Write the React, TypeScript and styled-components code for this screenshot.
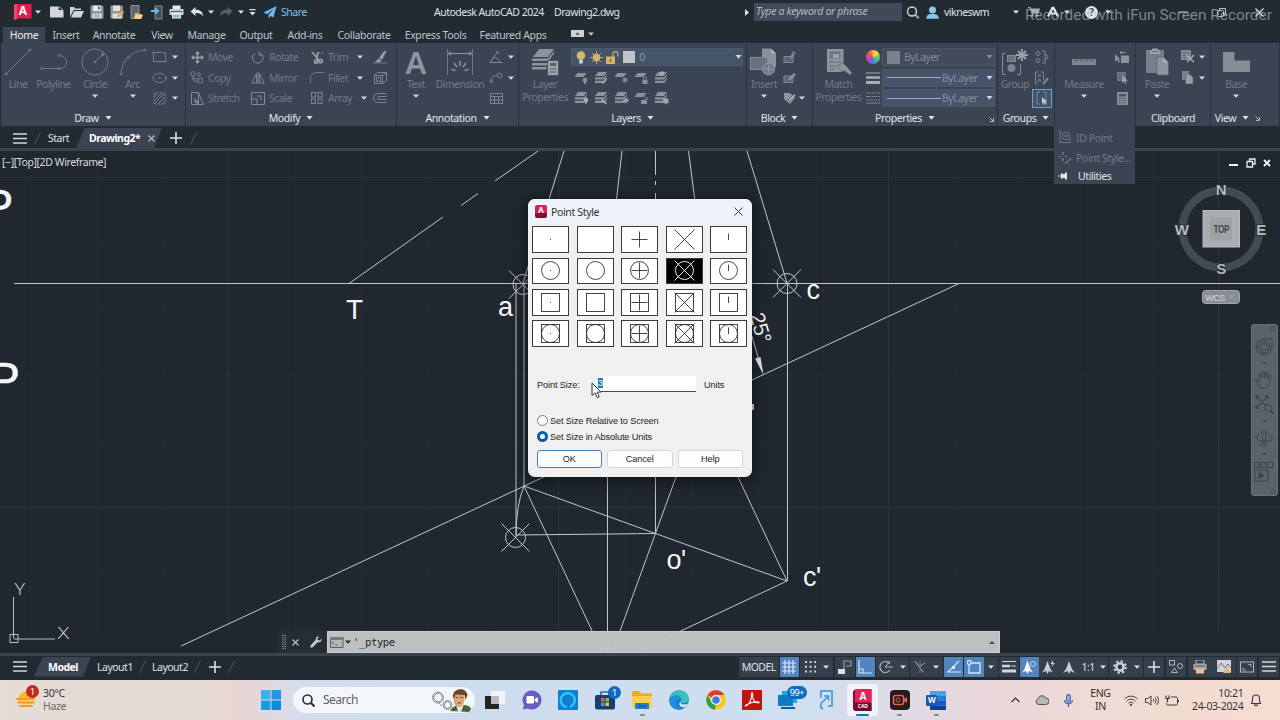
import React from 'react';
import styled, { createGlobalStyle, css } from 'styled-components';

const GlobalStyle = createGlobalStyle`
  *, *::before, *::after { box-sizing: border-box; }
  html, body { margin: 0; padding: 0; overflow: hidden; }
  body { background: #212830; }
`;

const ui = '"Noto Sans", "Open Sans", sans-serif';
const arial = '"Liberation Sans", Arial, sans-serif';
const dim = '#717987';
const panel = '#3b4453';
const dark = '#222a32';

/* ---------- icons ---------- */

type Art = [number, number, React.ReactNode];

const sheet = (x: number, y: number) => <path d={`M${x + 3} ${y}h9l-3 4h-9z`} />;

const stack = (extra: React.ReactNode): Art => [15, 14, (
  <g fill="#8b929c">
    {sheet(1, 1)}
    <path d="M1 6.200h9l3-3v1.500L10.200 8.500H1zM1 9.700h9l3-3v1.500L10.200 12H1z" />
    {extra}
  </g>
)];

const single = (extra: React.ReactNode): Art => [15, 14, (
  <g fill="#8b929c">{sheet(0.5, 2)}{extra}</g>
)];

const brackets = 'M5 1H2v12h3M8 1h3v12H8';

const ART: Record<string, Art> = {
  logo: [20, 18, (
    <g>
      <path d="M1 2.500L3 1v15l-3 1z" fill="#7c0f2c" />
      <path d="M2 1h16.500v14.500H6L1 17z" fill="#e31b4e" />
      <path d="M1 2.500L2 1h2v14.500L1 17z" fill="#f0496f" />
    </g>
  )],
  caret: [6, 4, <path d="M0 .5h6L3 3.700z" fill="currentColor" />],
  bigcaret: [7, 4, <path d="M.5 0h6L3.500 3.800z" fill="currentColor" />],
  newfile: [14, 12, <path d="M0 .5h8l5.500 4v7H0zM8.500 0v4h5z" fill="#d3d5d7" />],
  open: [14, 12, (
    <g fill="#d3d5d7"><path d="M0 1h4l1 1.500h6V4H3.500L0 11z" /><path d="M4 5h10l-3 6.500H1z" /></g>
  )],
  save: [14, 14, (
    <g>
      <path d="M.5.500h12L13.500 2v11.500H.5z" fill="#8f9497" />
      <path d="M3 .5h8V6H3z" fill="#e7e8e9" />
      <path d="M2.500 8.500h9v5h-9z" fill="#dfe1e2" />
      <path d="M8 1.500h2v3H8z" fill="#666d73" />
      <path d="M4 10h6M4 12h6" stroke="#8f9497" />
    </g>
  )],
  saveas: [15, 14, (
    <g>
      <path d="M.5.500h12L13 2v11.500H.5z" fill="#8f9497" />
      <path d="M3 .5h7V6H3zM2.500 8.500h9v5h-9z" fill="#dfe1e2" />
      <path d="M6.500 13l1-3 5-5 2 2-5 5z" fill="#d8b06a" />
      <path d="M12 5.500l2 2" stroke="#cf5b4c" strokeWidth="1.500" />
    </g>
  )],
  webopen: [14, 15, (
    <g>
      <path d="M2 .5h8v13H2z" fill="#5d656c" stroke="#8b9196" />
      <path d="M5 12h2" stroke="#ccc" />
      <path d="M6 8h3l1 1h3v4H5z" fill="#d9b45e" />
      <path d="M7 10h7l-2 4H5z" fill="#f1d187" />
    </g>
  )],
  websave: [13, 15, (
    <g>
      <path d="M4 1h7v13H4z" fill="#454d55" stroke="#858c92" />
      <path d="M0 6h6M4 3.200L7 6 4 8.800" stroke="#66bdf0" strokeWidth="1.800" fill="none" />
    </g>
  )],
  plot: [15, 14, (
    <g>
      <path d="M3.500.500h8V4h-8z" fill="#e8eaec" />
      <path d="M.5 4h14v6H.5z" fill="#c9cccf" />
      <path d="M2 6.500h11" stroke="#5a6269" />
      <path d="M3 8h9v5.500H3z" fill="#eef1f3" />
      <path d="M4 9.500h7v3H4z" fill="#7dbfe8" />
    </g>
  )],
  undo: [14, 10, <path d="M5.500 0v2.800c4.500 0 7.500 1.500 7.500 6.700-1.500-2.700-3.500-3.400-7.500-3.400V9L.5 4.500z" fill="#dcdfe1" />],
  redo: [14, 10, <path d="M8.500 0v2.800C4 2.800 1 4.300 1 9.500c1.500-2.700 3.500-3.400 7.500-3.400V9l5-4.500z" fill="#596068" />],
  customize: [7, 7, <g fill="#dcdfe1"><path d="M.5 0h6v1.300h-6zM.5 3h6L3.500 6.500z" /></g>],
  share: [14, 13, <path d="M13.500 0L.5 6.500l3.500 1.800L11 2.500 5.500 9v3.500l2-2.500 3 1.500z" fill="#6dbcf0" />],
  play: [4, 7, <path d="M0 0l4 3.500L0 7z" fill="#dfe2e5" />],
  search: [14, 13, (
    <g fill="none" stroke="#d5d8da"><circle cx="6" cy="5.500" r="4.500" strokeWidth="1.400" /><path d="M9.300 8.800l3.500 3.500" strokeWidth="2" stroke="#a99f86" /></g>
  )],
  user: [13, 13, <g fill="#8cc8ee"><circle cx="6.500" cy="4" r="3.500" /><path d="M.3 12.700c0-3.500 2.200-4.500 4-4.800h4.400c1.800.3 4 1.300 4 4.800z" /></g>],
  cart: [12, 10, <g fill="#a9adb1"><path d="M0 0h2.500l.7 1.500H12l-1.500 5h-7L1.800 1.200H0z" /><circle cx="4.500" cy="8.500" r="1.200" /><circle cx="9" cy="8.500" r="1.200" /></g>],
  autodesk: [14, 12, <path d="M7 1L2 10.500M7 1l5 9.500M3 7.500h8" fill="none" stroke="#e9ebed" strokeWidth="2.200" />],
  help: [13, 13, <circle cx="6.500" cy="6.500" r="6.500" fill="#e3e5e6" />],
  min: [9, 2, <path d="M0 1h9" stroke="#d0d3d6" />],
  restore: [9, 9, <g fill="none" stroke="#c4c8cb"><rect x=".5" y="2.500" width="6" height="6" rx="1" /><path d="M2.500 2V.5h6v6H7" /></g>],
  close: [9, 9, <path d="M.5.500l8 8M8.500.500l-8 8" stroke="#dfe2e4" strokeWidth="1.200" fill="none" />],
  minirib: [14, 7, <g><rect width="13" height="7" fill="#cfd2d5" /><path d="M4.500 4.800l2-2.500 2 2.500z" fill="#3a434c" /></g>],

  line: [28, 28, <g stroke={dim} fill={dim}><path d="M2 26L26 2" /><circle cx="2" cy="26" r="1" /><circle cx="26" cy="2" r="1" /></g>],
  polyline: [28, 28, <g stroke={dim} fill="none"><path d="M2 20.500h18c9 0 9-13-1-13" /><circle cx="1.500" cy="20.500" r="1" /><circle cx="19" cy="20.500" r="1" /><circle cx="19" cy="7.500" r="1" /></g>],
  circle: [28, 28, <g stroke={dim} fill="none"><circle cx="14" cy="14" r="13" /><path d="M14 14l7-7" /><circle cx="14" cy="14" r="1" fill={dim} /><path d="M20 6l2.500-.5L22 8z" fill={dim} /></g>],
  arc: [28, 28, <g stroke={dim} fill="none"><path d="M2 26C3 13 11 3 26 2" /><circle cx="2" cy="26" r="1" /><circle cx="9.500" cy="9.500" r="1" /><circle cx="26" cy="2" r="1" /></g>],
  rect: [15, 12, <g stroke={dim} fill={dim}><rect x="1.500" y="1.500" width="12" height="9" fill="none" /><path d="M.5.500h2v2h-2zM12.500 9.500h2v2h-2z" stroke="none" /></g>],
  ellipse: [15, 12, <g stroke={dim} fill="none"><ellipse cx="7.500" cy="6" rx="6.500" ry="4.500" /><circle cx="7.500" cy="6" r=".8" /><circle cx="14" cy="6" r=".8" /></g>],
  hatch: [13, 13, <g stroke={dim} fill="none"><rect x="1" y="1" width="11" height="11" strokeDasharray="2 1" /><path d="M1 5l4-4M1 9l8-8M1 12L12 1M5 12l7-7M9 12l3-3" /></g>],
  move: [13, 13, <path d="M6.500 0L9 3H7.300v2.700H10V4l3 2.500L10 9V7.300H7.300V10H9l-2.500 3L4 10h1.700V7.300H3V9L0 6.500 3 4v1.700h2.700V3H4z" fill="#9aa0a8" />],
  rotate: [13, 13, <g fill="none" stroke="#868d98"><path d="M4 2.200A5.300 5.300 0 1 0 9.500 2.200" /><path d="M8 .5v3.500h3.500" /></g>],
  trim: [13, 13, <g fill="none" stroke="#9aa0a8" strokeWidth="1.700"><path d="M1 1l6.500 7.500M7 1L5.500 8.500" /><circle cx="9.500" cy="10" r="1.700" /><circle cx="5" cy="10.700" r="1.500" /><path d="M7 2h5" stroke="#8b929c" strokeWidth="1" strokeDasharray="2 1" /></g>],
  erase: [14, 14, <g fill="#979da6"><path d="M6 8l5-7h2.500L9 10zM2 12l3.500-3.500 3 2.500-2 1.500z" /><path d="M0 12.500h14v1H0z" fill={dim} /></g>],
  copy: [14, 13, <g fill="none" stroke="#808793"><circle cx="3" cy="3" r="2.300" /><circle cx="9" cy="3.500" r="1.500" /><circle cx="5.500" cy="9" r="1.800" /><circle cx="10.500" cy="9.500" r="2.500" /><path d="M3 5.500V9" /></g>],
  mirror: [14, 12, <g fill="none" stroke="#7d8490"><path d="M5.500 1.500v9.500H.8zM8.500 1.500v9.500h4.700z" /><path d="M7 0v12" /></g>],
  fillet: [14, 13, <g fill="none" stroke="#737b88"><path d="M.5 12.500V8M6 1.500C3 1.500.7 4 .5 8M6 1.500h8" /></g>],
  explode: [13, 12, <g fill="none" stroke="#7d8490"><rect x=".5" y="3.500" width="8" height="8" /><path d="M.5 3.500l3-3h9v8l-4 3M8.500 3.500l4-3" /><rect x="2.500" y="5.500" width="4" height="4" /></g>],
  stretch: [13, 13, <g fill="none" stroke="#838a95"><path d="M.5.500h7v12h-7zM7.500 1l5 11.500h-5" /><path d="M4 6v4h3M5.500 8l2 2-2 2" stroke="#a0a6ad" /></g>],
  scale: [14, 13, <g fill="none" stroke="#838a95"><path d="M.5.500h13v12H.5z" /><path d="M.5 7h5.500v5.500" /><path d="M6 4h4v4" /></g>],
  array: [13, 12, <g fill="none" stroke="#7d8490"><rect x=".5" y=".5" width="4" height="4.500" /><rect x="7" y=".5" width="4" height="4.500" /><rect x=".5" y="7" width="4" height="4.500" /><rect x="7" y="7" width="4" height="4.500" /></g>],
  offset: [14, 10, <g fill="none" stroke="#7d8490"><path d="M13.500.500H5a4.500 4.500 0 0 0 0 9h8.500M13.500 3.500H6a1.500 1.500 0 0 0 0 3h7.500" /></g>],
  dimension: [28, 28, <g fill="none" stroke="#8b929c"><path d="M1.500 1v26M26.500 1v26" stroke={dim} /><path d="M2 5.500h24M5 4L2 5.500 5 7M23 4l3 1.500L23 7" /><path d="M14 13v5M8 15l3 4M20 15l-3 4M5.500 21.500l4 1M22.500 21.500l-4 1" strokeWidth="1.600" /></g>],
  angle: [14, 14, <g fill="none" stroke="#838a95"><path d="M9 1L1 12.500h12.500M4.500 7.500c3 0 5.500 1.500 6 5M9 1v3" /></g>],
  leader: [13, 11, <g fill="none" stroke="#838a95"><path d="M1 10C1 5 3 3.500 7 3.500" /><circle cx="9.500" cy="3.500" r="2.300" /><path d="M0 8l1 2.500L3 9" /></g>],
  table: [13, 11, <g fill="none" stroke="#7d8490"><rect x=".5" y=".5" width="12" height="10" /><path d="M.5 3.500h12M.5 7h12M4.500 3.500v7M8.500 3.500v7" /></g>],
  layerprops: [28, 28, (
    <g fill="#8e949d">
      <path d="M8 1h15l-6 8H2z" />
      <path d="M1 10.500h16l6-7.500v2.500l-5.500 7.500H1zM1 15h15l2-2.500V15l-2 2.500H1zM1 19h14.500v2.500H1z" />
      <rect x="16.500" y="12.500" width="11" height="15" fill="#9da3ab" stroke="#4c5563" />
      <path d="M19 15h6v3h-6z" fill="#59616e" />
      <path d="M18.500 21h7M18.500 24h7" stroke="#59616e" />
    </g>
  )],
  bulb: [10, 13, <g><circle cx="5" cy="4.500" r="4.300" fill="#d3b970" /><path d="M3.200 8.500h3.600v4H3.200z" fill="#c9d0da" /></g>],
  sun: [13, 13, <g><circle cx="6.500" cy="6.500" r="3.700" fill="#cfb46c" /><path d="M6.500 0v13M0 6.500h13M2 2l9 9M11 2l-9 9" stroke="#cfb46c" strokeWidth=".9" /></g>],
  unlock: [13, 13, <g><path d="M0 5.500h9V13H0z" fill="#cfb46c" /><path d="M7 6V3a2.400 2.400 0 0 1 4.800 0v2.500" fill="none" stroke="#b59c5c" strokeWidth="1.500" /><path d="M4.500 8v3" stroke="#6c6240" strokeWidth="1.200" /></g>],
  l1: single(<g><circle cx="11" cy="9" r="2.300" /><path d="M10 11h2v2h-2z" /></g>),
  l2: stack(<path d="M8 12l4-5 1 1-4 5z" fill="#a9aeb5" />),
  l3: single(<path d="M11 6v6M8 9h6M9 7l4 4M13 7l-4 4" stroke="#8b929c" />),
  l4: single(<g><path d="M8.500 9h5v4h-5z" /><path d="M9.500 9V7.500a1.500 1.500 0 0 1 3 0V9" fill="none" stroke="#8b929c" /></g>),
  l5: stack(<circle cx="8" cy="2.500" r="2.300" fill="#a0a6ad" />),
  l6: stack(<g><circle cx="12" cy="9" r="2.300" fill="#a9aeb5" /><path d="M11 11h2v2h-2z" /></g>),
  l7: stack(<path d="M8 8l5 4-1 1.500-5-4z" fill="#a9aeb5" />),
  l8: stack(<path d="M12 6.500v6M9 9.500h6M10 7.500l4 4M14 7.500l-4 4" stroke="#a9aeb5" />),
  l9: single(<g><path d="M7 9h6v4H7z" /><path d="M11 9V7.500a1.300 1.300 0 0 1 2.600 0V9" fill="none" stroke="#8b929c" /></g>),
  l10: stack(<path d="M12 6.500l1 1.500h2l-1 2 1 2h-2l-1 1.500-1.500-1.500h-2l1-2-1-2h2z" fill="#a0a6ad" />),
  insert: [28, 28, (
    <g>
      <path d="M12 .5h9l5 5V19H12z" fill="#8a9099" /><path d="M21 .5l5 5h-5z" fill="#b1b5bb" />
      <rect x=".5" y="9.500" width="17" height="12" fill="#66707f" stroke="#858c97" />
      <circle cx="18.500" cy="21" r="6" fill="#727b88" stroke="#959ba4" /><path d="M18.500 17v8M14.500 21h8" stroke="#959ba4" />
    </g>
  )],
  b1: [14, 13, <g fill="#7f8692"><path d="M1 5.500h9v6H1z" fill="#5b6472" stroke="#7f8692" /><path d="M6 6l3.500-3.500 2 2L8 8z" /><path d="M10.500 0v4M8.500 2h4.500" stroke="#7f8692" /></g>],
  b2: [14, 13, <g fill="#8b929c"><path d="M1 5h9v6.500H1z" fill="#5b6472" stroke="#7f8692" /><path d="M5 8l6-6 2 1.500-6 6z" /></g>],
  b3: [14, 13, <g fill="#8b929c"><path d="M1 1h6l5 5-5 6-6-5z" /><path d="M5 8l6-6 2 1.500-6 6z" fill="#aeb3b9" stroke="#3b4453" strokeWidth=".6" /></g>],
  match: [28, 28, (
    <g>
      <rect x="2" y="1" width="16.500" height="23" fill="#8f959d" />
      <path d="M4.500 3.500h11v7h-11z" fill="#6c7480" /><path d="M8 6h6v4H8z" fill="#9ea4ab" />
      <path d="M4 14h12M4 18h8M5 21h5" stroke="#636b78" />
      <path d="M14 17l3.500-2.500 5 5L27 25l-2 2-6-4.500-2 1.500-4-4z" fill="#8f959d" stroke="#555d6a" strokeWidth=".7" />
    </g>
  )],
  linew: [14, 14, <g stroke="#a5abb2"><path d="M0 2h14" /><path d="M0 6.500h14" strokeWidth="2.500" /><path d="M0 11.500h14" strokeWidth="3" /></g>],
  linet: [14, 12, <g stroke="#7f8692"><path d="M0 1h14" strokeDasharray="2 1" /><path d="M0 4.500h14" strokeDasharray="5 1" /><path d="M0 8h14" strokeDasharray="3 1" /><path d="M0 11h14" /></g>],
  group: [28, 28, (
    <g>
      <path d="M5 5.500H1.500v21H5M16 26.500h3.500V16" fill="none" stroke="#848b96" />
      <rect x="6.500" y="7.500" width="8" height="6" fill="#69727f" stroke="#848b96" />
      <circle cx="10.500" cy="20" r="4" fill="#7a828e" />
      <path d="M21 1v12M15 7h12M17 3l8 8M25 3l-8 8" stroke="#9ba1a9" strokeWidth="1.800" />
    </g>
  )],
  g1: [14, 14, <g fill="none" stroke="#7f8692"><circle cx="3" cy="3.500" r="2" /><circle cx="3" cy="10.500" r="2" /><path d="M7 1h3v12H7M11 4l2 3-2 3" /></g>],
  g2: [14, 14, <g fill="none" stroke="#7f8692"><path d="M3 1H.5v12H3M6 1h2.500v8" /><circle cx="4.500" cy="4.500" r="1.200" /><circle cx="4.500" cy="9.500" r="1.200" /><path d="M8 13l5-6" strokeWidth="2" /></g>],
  g3: [14, 14, <g fill="none" stroke="#7489a0"><path d={brackets} /><path d="M7 6v7l1.800-1.500 1.200 2 1.200-.8-1-2h2z" fill="#c3c9d0" stroke="none" /></g>],
  measure: [24, 28, <g><path d="M0 11h24v6H0z" fill="#7e858f" /><path d="M3 11v3M6 11v2M9 11v3M12 11v2M15 11v3M18 11v2M21 11v3" stroke="#4a5361" /></g>],
  u1: [14, 13, <g fill="#8b929c"><path d="M0 3l5 5H3.500L5 11l-1.500.7L2 9l-2 1.500z" /><path d="M6 4.500h8V12H6z" /><path d="M5 1.500h6M7 0L5 1.500 7 3" stroke="#8b929c" fill="none" /></g>],
  u2: [13, 13, <g><rect x="1.500" y="1.500" width="8" height="8" fill="#656e7b" stroke="#7f8692" strokeDasharray="2 1" /><path d="M6 4v8l2-1.500L9.500 13l1-1-1.300-2H12z" fill="#9aa0a8" /></g>],
  u3: [11, 13, <g><rect width="11" height="13" fill="#868d98" /><path d="M2 2h7v2.500H2z" fill="#4a5361" /><path d="M2 6.500h7M2 8.800h7M2 11h7" stroke="#4a5361" strokeDasharray="1.600 1" /></g>],
  paste: [23, 28, (
    <g>
      <rect x="0" y="2" width="18" height="23" fill="#787f8a" /><path d="M4 2h2V.5h6V2h2v4H4z" fill="#9aa0a7" />
      <path d="M5.500 3.500h7" stroke="#666e7a" />
      <path d="M11 9h6l5.500 5.500V27H11z" fill="#8e949c" stroke="#5a626f" strokeWidth=".7" /><path d="M17 9v5.500h5.500z" fill="#a8adb3" />
    </g>
  )],
  cut: [14, 14, <g><path d="M0 0h10v10H0z" fill="#858c96" /><path d="M2 3h6M2 5.500h6M2 8h3" stroke="#565e6b" /><path d="M5 5l8 7M13 5l-7 7" stroke="#aab0b7" strokeWidth="1.400" /></g>],
  copyclip: [12, 13, <g><path d="M0 0h7v9H0z" fill="#7d8490" /><path d="M3.500 3h4L11 6.500V13H3.500z" fill="#989ea6" stroke="#525b68" strokeWidth=".7" /></g>],
  base: [28, 28, <path d="M1 4h11.500v8.500H28V24H1z" fill="#868c95" />],
  idpoint: [13, 13, <g fill="none" stroke={dim}><circle cx="7" cy="5" r="3.800" /><circle cx="7" cy="5" r="1" /><path d="M10 8l2.500 2M1 0v11.500h11M0 1.500L1 0l1 1.500M0 11.500h2" /></g>],
  ptstyle: [13, 12, <g fill="none" stroke={dim}><path d="M4 0v3M4 6v3M0 4.500h2M6 4.500h2" strokeWidth="1.500" /><path d="M6 11.500l6-5" strokeWidth="1.500" /></g>],
  pin: [10, 8, <path d="M0 3.500h3v1H0zM3 1h1.200v6H3zM4.200 2h3v4h-3zM7 .5h2v7H7z" fill="#dfe2e5" />],
  corner: [5, 5, <path d="M.5.500l3.500 3.500M4.500 1v3.500H1" fill="none" stroke="#bfc4ca" strokeWidth=".9" />],
  menu: [14, 11, <path d="M0 1h14M0 5.500h14M0 10h14" stroke="#d3d6d9" strokeWidth="1.700" />],
  plus: [12, 12, <path d="M6 0v12M0 6h12" stroke="#dfe2e4" strokeWidth="1.600" />],
  slash: [7, 13, <path d="M6.500.500L.5 12.500" stroke="#4d565f" />],
  x: [7, 7, <path d="M.5.500l6 6M6.500.500l-6 6" stroke="#b5bac0" strokeWidth="1.300" />],

  vpmin: [9, 8, <path d="M0 6h9" stroke="#f2f3f4" strokeWidth="2" />],
  vprestore: [10, 10, <g fill="none" stroke="#eef0f1" strokeWidth="1.300"><path d="M1 3.500h5.500V9H1zM3.500 3V1H9v5H7" /></g>],
  vpclose: [8, 8, <path d="M1 1l6 6M7 1L1 7" stroke="#f2f3f4" strokeWidth="1.900" />],
  wheel: [18, 18, <g fill="none" stroke="#3d454c"><path d="M9 .8h8V9A8 8 0 1 1 9 .8z" /><circle cx="9" cy="9" r="6" /><circle cx="9" cy="9" r="3.500" /></g>],
  hand: [19, 19, <path d="M6 18c-2-3-4-5-5.500-8 1-1.200 2.500-.2 4 2L3.500 4c1-1.200 2-.5 2.800 2.500L7 8l0-6c1-1.300 2.200-.6 2.300 1L9.700 8l1.100-5.500c1.200-1 2.200 0 1.900 1.500L12.300 9l2-4c1.200-.6 1.900.4 1.500 1.700-1 5-1.300 8-4.300 11.300z" fill="none" stroke="#3d454c" />],
  zoomext: [19, 19, <g fill="none" stroke="#3d454c"><path d="M1 1l12 12M13 1L1 13M1 4V1h3M10 1h3v3M1 10v3h3" strokeWidth="1.300" /><circle cx="13.500" cy="13" r="3.500" fill="#5b636a" /><path d="M16 16l3 3" strokeWidth="1.800" /></g>],
  orbit: [19, 19, <g fill="none" stroke="#3d454c"><path d="M9 1l3 3h-1.500v11H12l-3 3-3-3h1.500V4H6z" /><path d="M3 7.500c-4 2 0 4.500 6 4.500 8 0 12-3 5-5" /><path d="M3 5v3H0" /></g>],
  motion: [20, 20, <g fill="none" stroke="#3d454c"><rect x=".5" y=".5" width="5" height="5" /><rect x="7" y=".5" width="5" height="5" /><rect x="13.500" y=".5" width="5" height="5" /><rect x="1" y="8" width="13" height="11" /><path d="M5 10.500v6l5-3z" fill="#3d454c" /></g>],
  tiny: [5, 3, <path d="M0 0h5L2.500 2.500z" fill="#3d454c" />],
  ring: [6, 6, <circle cx="3" cy="3" r="2.300" fill="none" stroke="#444c53" />],
  grip: [4, 14, <path d="M1 0v14M3.300 0v14" stroke="#c4c8cb" strokeDasharray="1 1.200" />],
  wrench: [12, 12, <path d="M11.600 2.600L9.500 4.500 7.700 4 7.500 2.500 9.300.500C7 0 5.500 1.500 5.700 3.800L.5 9.500c-.7 1.500.6 2.600 2 2l5.200-5.200C10 6.700 12 5 11.600 2.600z" fill="#c3c7ca" />],
  cmd: [14, 11, <g><rect x=".5" y=".5" width="12.500" height="10" fill="#b4b7b9" stroke="#5d6367" /><path d="M0 0h13.500v3H0z" fill="#747a7e" /><path d="M2 5l1.500 1L2 7M5 8h2.500" stroke="#444" strokeWidth=".7" fill="none" /></g>],
  up: [6, 3, <path d="M0 3L3 0l3 3z" fill="#444a4e" />],

  sgrid: [14, 14, <path d="M3 0v14M7 0v14M11 0v14M0 3h14M0 7h14M0 11h14" stroke="#dce8f5" strokeWidth="1.200" />],
  snap: [12, 12, <path d="M1 1h11M1 5.700h11M1 10.500h11" stroke="#cdd1d6" strokeWidth="2" strokeDasharray="2 2.600" />],
  infer: [14, 14, <g><path d="M0 9h7v5H0z" fill="#dde0e3" /><path d="M6 9V1h7v5H8" fill="none" stroke="#969da6" strokeWidth="1.200" /></g>],
  ortho: [14, 14, <g fill="none" stroke="#d8e6f5" strokeWidth="1.200"><path d="M1 0v13h13" /><path d="M1 9h4v4" /></g>],
  polar: [14, 13, <g fill="none" stroke="#b3b8bf"><path d="M11 10A5.500 5.500 0 1 1 11 4" strokeWidth="1.200" /><path d="M6 7h8M6 7l5-6" /></g>],
  iso: [12, 13, <g fill="none"><path d="M1 1l8 11" stroke="#b3b8bf" /><path d="M6 0v13" stroke="#8e6a70" /><path d="M6 6l5-3" stroke="#7fae8d" /></g>],
  otrack: [14, 13, <g fill="none" stroke="#dce8f5" strokeWidth="1.200"><path d="M0 12h14M1 12L12 1" /><path d="M5 6h3v3H5z" fill="#dce8f5" stroke="none" /></g>],
  osnap: [14, 14, <g fill="none" stroke="#dce8f5" strokeWidth="1.300"><path d="M2 5v8h11V3H5" /><circle cx="2.200" cy="2.500" r="2" /></g>],
  lwt: [14, 13, <g stroke="#d3d7db"><path d="M0 1.500h14" /><path d="M0 6h8" strokeWidth="2.500" /><path d="M9 6h5" strokeWidth="1" /><path d="M0 11h14" strokeWidth="3" /></g>],
  ann1: [14, 14, <g><path d="M5.500 0L8.500 9l2.500 3.500-4-1.500-1.500 3L4 11l-4 1.500L2.500 9z" fill="#eef4fb" /><circle cx="11" cy="4" r="2.500" fill="none" stroke="#b9d5ee" /></g>],
  ann2: [14, 14, <g fill="#c9cdd2"><path d="M5.500 1L8.500 9l2.500 3.500-4-1.500-1.500 3L4 11l-4 1.500L2.500 9z" /><path d="M11 0L8.500 4h2l-1 3L13 3h-2z" /></g>],
  ann3: [12, 14, <path d="M6 1l3 8 3 4-4.500-2L6 14l-1.500-3L0 13l3-4z" fill="#c9cdd2" />],
  gear: [14, 14, <g><circle cx="7" cy="7" r="3.600" fill="none" stroke="#d3d7db" strokeWidth="2.400" /><circle cx="7" cy="7" r="5.800" fill="none" stroke="#d3d7db" strokeWidth="2" strokeDasharray="2.300 2.250" /></g>],
  isolate: [14, 13, <g fill="none" stroke="#adb2b9"><rect x=".5" y=".5" width="5" height="4.500" /><circle cx="11" cy="6" r="2.500" /><path d="M2.500 12.500h6L5.500 8z" /></g>],
  sprint: [14, 14, <g><path d="M3 0h8v4H3z" fill="none" stroke="#b8bdc2" /><path d="M.5 4h13v6H.5z" fill="#a9aeb4" /><path d="M2 6h10" stroke="#454d58" /><path d="M3 9h8v4.500H3z" fill="#f0bd8c" /></g>],
  image: [14, 14, <g><path d="M0 0h14v12H0z" fill="#d0d3d6" /><path d="M0 9l4-6 4 5 3-4 3 4" fill="none" stroke="#6f777f" /><path d="M6 13l4-6 4 6z" fill="#efaf78" /></g>],
  clean: [14, 12, <g fill="none" stroke="#b3b8be"><rect x=".5" y="1" width="13" height="10" /><path d="M3 6.500V9h2.500M8.500 3.500H11V6" /></g>],

  haze: [20, 20, <g><circle cx="10" cy="9" r="7.500" fill="#f7b733" /><path d="M1 9h17M2 12.500h16M4 16h12" stroke="#f29a2e" strokeWidth="2" strokeLinecap="round" /><path d="M5 10.700h12M3 14.300h13" stroke="#ffe29a" strokeWidth=".9" /></g>],
  windows: [20, 20, <g fill="#1389dc"><path d="M0 0h9.500v9.500H0z" fill="#35b2f0" /><path d="M10.500 0H20v9.500h-9.500zM0 10.500h9.500V20H0z" fill="#1c9ae6" /><path d="M10.500 10.500H20V20h-9.500z" /></g>],
  find: [13, 13, <g fill="none" stroke="#25282c" strokeWidth="1.600"><circle cx="5.500" cy="5.500" r="4.500" /><path d="M9 9l3.500 3.500" strokeWidth="2" /></g>],
  doodle: [42, 24, (
    <g>
      <g fill="none" stroke="#7d8186" strokeWidth=".9"><circle cx="8" cy="9.500" r="5.500" /><circle cx="8" cy="9.500" r="4.200" /><circle cx="17.500" cy="17" r="4.500" /><circle cx="17.500" cy="17" r="3.300" /><path d="M9 15l3 3" /></g>
      <path d="M20 23c2-4 5-5 8-6h6c3 0 6 1 7 4l-2 3z" fill="#47683e" />
      <path d="M26 16h8l-3 8h-3z" fill="#e9e6df" />
      <ellipse cx="29" cy="11" rx="5.500" ry="8" fill="#dba87e" />
      <path d="M23 9c-1-9 13-11 14.500-2l-2 5-1-5-9-.5-1.500 4z" fill="#6b4526" />
      <path d="M25.500 9.500h2.500M30.500 9.500H33M27.500 15h3.500" stroke="#5b3c22" strokeWidth=".9" />
    </g>
  )],
  taskview: [20, 20, <g><path d="M6 1h14v13H6z" fill="#f4f4f4" /><path d="M0 6h14v13H0z" fill="#252525" /><path d="M6 6h8v8H6z" fill="#b9bcc0" /></g>],
  chat: [20, 20, <g><path d="M10 .5a9.500 9.500 0 1 1-4.500 17.900L.8 19.500 2 15A9.500 9.500 0 0 1 10 .5z" fill="#6b5cc3" /><rect x="4.500" y="6" width="7.500" height="7.500" rx="1.300" fill="#fff" /><path d="M12.800 9l3-2v6l-3-2z" fill="#fff" /></g>],
  alexa: [20, 20, <g><path d="M0 0h20v20H0z" fill="#0f7fd0" /><path d="M8.800 17A7 7 0 1 1 12 16.700" fill="none" stroke="#39c4f5" strokeWidth="2.200" /></g>],
  store: [20, 20, <g><path d="M6 5V2h8v3" fill="none" stroke="#1b6fb5" strokeWidth="1.500" /><rect y="5" width="20" height="14.500" rx="2" fill="#17406f" /><path d="M6 8h3.500v3.500H6z" fill="#ef5b31" /><path d="M10.500 8H14v3.500h-3.500z" fill="#80bc31" /><path d="M6 12.500h3.500V16H6z" fill="#2da4e8" /><path d="M10.500 12.500H14V16h-3.500z" fill="#fbbd2e" /></g>],
  explorer: [20, 18, <g><path d="M0 1.500C0 .5.500 0 1.500 0H7l2 2.500h9.500c1 0 1.500.5 1.500 1.500V16H0z" fill="#e9a922" /><path d="M0 5h20v12H0z" fill="#fccf50" /><path d="M3 12h14v6H3z" fill="#1f7fce" /><path d="M6 15h8" stroke="#0f5da8" strokeWidth="1.500" /></g>],
  edge: [20, 20, (
    <g>
      <circle cx="10" cy="10" r="9.800" fill="#1577c9" />
      <path d="M.3 10C.5 4 5 .2 10 .2c6 0 9.800 4.200 9.800 8.300 0 3-2.300 4.700-5 4.700-2.300 0-3.300-1-3.300-1.700 0-.5.700-.9.700-2.300C12.200 7 9.500 5 6.500 5.500 3 6 .8 8 .3 10z" fill="#38c2b6" />
      <path d="M.3 10C1 7 3.500 5.500 6.500 5.500c3.400 0 5.700 1.700 5.700 3.700-5-.5-6.500 7 .8 9.800C6 21 0 16.500.3 10z" fill="#1c8de0" />
      <path d="M19 13.500c-1.500 1-8 2-7.500-2-2.500 2-1 6.500 4 6 1.500-.8 3-2.500 3.500-4z" fill="#d8e4f2" />
    </g>
  )],
  chrome: [20, 20, (
    <g>
      <circle cx="10" cy="10" r="9.800" fill="#f8c71d" />
      <path d="M10 10L1.500 5.100A9.800 9.800 0 0 1 18.500 5.100H10z" fill="#e33b2e" />
      <path d="M1.500 5.100L5.700 12.500 10 14.900 8.800 19.700A9.800 9.800 0 0 1 1.500 5.100z" fill="#2da04c" />
      <circle cx="10" cy="10" r="4.900" fill="#fff" /><circle cx="10" cy="10" r="3.800" fill="#3a7de8" />
    </g>
  )],
  acrobat: [20, 20, <g><path d="M0 0h20v20H0z" fill="#c0150f" /><path d="M3.500 16c4-1.500 6.500-6.500 6-12-.2-1.500 1.500-1.500 1.200.3C10 9 12.500 13 16.500 13c1-.2.800-1.300-.5-1.300-4 0-8 1-11.500 3-1.200.7-1.500 1.800-1 1.300z" fill="none" stroke="#fff" strokeWidth="1.100" /></g>],
  monitors: [22, 20, <g><path d="M4 1h15v12H4z" fill="#2ba4e6" /><path d="M0 5h15v11H0z" fill="#1278c8" /><path d="M3 17h14v2H3z" fill="#0c5c9f" /></g>],
  link: [14, 20, <g fill="none" stroke="#2d93df" strokeWidth="1.500"><path d="M2 8V1h11v15H9" /><path d="M5 6h4.500v4.500" /><path d="M9.500 6L4 11.500c-3.500 2.500-3 6 0 7.500" /></g>],
  acad: [20, 22, <g><path d="M3 0h15.500v22H2L0 20V2.500z" fill="#c50f46" /><path d="M3 0h15.500v13H0V2.500z" fill="#e2245d" /><path d="M0 2.500L2 1v21l-2-2z" fill="#8f0a33" /><path d="M2 14h16.500v8H2z" fill="#6c0d2b" /></g>],
  ifun: [20, 20, <g><rect width="20" height="20" rx="4" fill="#231a1c" /><rect x="3.500" y="5.500" width="10" height="9" rx="2" fill="none" stroke="#ee5b5b" strokeWidth="1.600" /><path d="M14 9l3-2v6l-3-2z" fill="#ee5b5b" /><circle cx="8" cy="10" r="2" fill="none" stroke="#ee5b5b" /></g>],
  word: [20, 19, <g><path d="M4 0h16v5H4z" fill="#41a5ee" /><path d="M4 5h16v5H4z" fill="#2b7cd3" /><path d="M4 10h16v4.500H4z" fill="#185abd" /><path d="M4 14.500h16V19H4z" fill="#103f91" /><rect y="4" width="11" height="11" rx="1" fill="#1a56b3" /></g>],
  chev: [9, 6, <path d="M.5 5l4-4 4 4" fill="none" stroke="#333" strokeWidth="1.200" />],
  cloud: [14, 10, <path d="M3.500 9.500a3 3 0 0 1-.3-5.800A4 4 0 0 1 10.700 3a3.200 3.200 0 0 1 0 6.500z" fill="#b5b9ba" stroke="#4d5152" />],
  mic: [9, 13, <g fill="none" stroke="#3461ad" strokeWidth="1.200"><rect x="2.700" y=".6" width="3.600" height="7.500" rx="1.800" fill="#a9bde0" /><path d="M.6 6c0 5 7.800 5 7.800 0M4.500 10v3" /></g>],
  wifi: [14, 11, <g fill="none" stroke="#3c3c3c" strokeWidth="1"><path d="M.5 4C4 .2 10 .2 13.500 4M2.500 6.200c2.500-2.600 6.500-2.600 9 0M4.500 8.300c1.500-1.500 3.500-1.500 5 0" /><circle cx="7" cy="9.800" r=".7" fill="#333" /></g>],
  volume: [14, 11, <g fill="none" stroke="#3c3c3c"><path d="M.5 3.500h2.300L6 1v9L2.800 7.500H.5z" /><path d="M8 4c.9.900.9 2.200 0 3M9.800 2.500c1.800 1.800 1.800 4.200 0 6M11.600 1c2.600 2.600 2.600 6.400 0 9" /></g>],
  battery: [14, 11, <g fill="none" stroke="#3c3c3c"><path d="M6 2h5c.8 0 1.500.5 1.500 1.500v5c0 1-.7 1.500-1.500 1.500H3c-1 0-1.500-.5-1.500-1.500V8" /><path d="M13.500 5v2" strokeWidth="1.500" /><path d="M1 .5v3h3v-3M2.500 3.500v4" strokeWidth="1.200" /></g>],
  bell: [12, 13, <path d="M1.500 9.500L2.500 7V4.500a3.500 3.500 0 0 1 7 0V7l1 2.500zM4.500 10c0 2.500 3 2.500 3 0" fill="none" stroke="#3c3c3c" strokeWidth="1.100" />],
};

const Glyph = styled.svg`
  display: block;
  flex: none;
`;

const Icon = ({ n }: { n: string }) => {
  const [w, h, body] = ART[n];
  return <Glyph width={w} height={h} viewBox={`0 0 ${w} ${h}`}>{body}</Glyph>;
};

/* ---------- shared ---------- */

const Window = styled.div`
  width: 1280px;
  height: 720px;
  display: flex;
  flex-direction: column;
  position: relative;
  overflow: hidden;
  background: ${dark};
  font-family: ${ui};
  font-size: 10.5px;
  letter-spacing: -0.5px;
  line-height: 14px;
  color: #dfe2e5;
  white-space: nowrap;
`;

const Slot = styled.div<{ $w: number }>`
  width: ${(p) => p.$w}px;
  height: 100%;
  flex: none;
  position: relative;
  display: flex;
  align-items: center;
  justify-content: center;
`;

const Cell = styled.div<{ $w: number }>`
  width: ${(p) => p.$w}px;
  flex: none;
`;

const Gap = styled.div<{ $w: number }>`
  flex: none;
  width: ${(p) => p.$w}px;
`;

/* ---------- title bar ---------- */

const TitleBar = styled.div`
  height: 24px;
  flex: none;
  display: flex;
  align-items: center;
`;

const LogoLetter = styled.span<{ $top: number; $size: number }>`
  position: absolute;
  top: ${(p) => p.$top}px;
  left: 0;
  right: 0;
  text-align: center;
  color: #fff;
  font: bold ${(p) => p.$size}px/1 ${ui};
  letter-spacing: 0;
`;

const ShareText = styled(Cell)`
  color: #7dc2ee;
`;

const SearchBox = styled.div`
  width: 148px;
  height: 18px;
  background: #3f4957;
  color: #b6bcc4;
  font-style: italic;
  padding: 1px 2px;
  line-height: 15px;
  letter-spacing: -0.3px;
`;

const HelpMark = styled.span`
  position: absolute;
  font: bold 10px/13px ${ui};
  color: #4a5158;
`;

const Watermark = styled.div`
  position: absolute;
  left: 1025px;
  top: 4px;
  width: 252px;
  font: 15.400px/22px Roboto, sans-serif;
  letter-spacing: 0;
  color: rgba(180, 184, 188, 0.66);
`;

const WindowButtons = styled.div`
  height: 24px;
  margin-left: auto;
  margin-right: 1px;
  display: flex;
`;

const Quick = ({ items }: { items: [string, number][] }) => (
  <>{items.map(([n, w], i) => <Slot $w={w} key={i}><Icon n={n} /></Slot>)}</>
);

/* ---------- ribbon ---------- */

const RibbonTabs = styled.div`
  height: 19px;
  flex: none;
  display: flex;
  padding-left: 3px;
  color: #bfc4c9;
  letter-spacing: -0.35px;
`;

const RibbonTab = styled.div<{ $w: number; $active?: boolean }>`
  width: ${(p) => p.$w}px;
  text-align: center;
  padding-top: 4px;
  height: 16px;
  margin-top: ${(p) => (p.$active ? 3 : 0)}px;
  ${(p) => p.$active && css`
    background: ${panel};
    padding-top: 1px;
    color: #eceef0;
  `}
`;

const Ribbon = styled.div`
  height: 83px;
  flex: none;
  display: flex;
  padding-left: 1px;
  position: relative;
  z-index: 3;
`;

const Panel = styled.section<{ $w: number }>`
  width: ${(p) => p.$w}px;
  flex: none;
  background: ${panel};
  border-right: 1px solid #2a323d;
  display: flex;
  flex-direction: column;
  position: relative;
  color: ${dim};
  > div { flex: none; }
`;

const PanelBody = styled.div`
  height: 67px;
  display: flex;
  align-items: flex-start;
`;

const PanelTitle = styled.div`
  height: 16px;
  display: flex;
  align-items: center;
  justify-content: center;
  gap: 6px;
  color: #e2e5e8;
  letter-spacing: -0.4px;
`;

const Launcher = styled.span`
  position: absolute;
  right: 3px;
  bottom: 4px;
`;

const BigButton = styled.div<{ $w: number }>`
  width: ${(p) => p.$w}px;
  flex: none;
  padding-top: 5px;
  display: flex;
  flex-direction: column;
  align-items: center;
  text-align: center;
`;

const BigLabel = styled.div`
  margin-top: 2px;
  line-height: 13px;
  margin-bottom: 3px;
`;

const BigGlyph = styled.div`
  font: 600 31px/28px ${ui};
  letter-spacing: 0;
  height: 28px;
  color: #8f959e;
`;

const Lite = styled.span`
  color: #d3d7db;
  display: flex;
`;

const SmallColumn = styled.div<{ $w: number; $pad?: number }>`
  width: ${(p) => p.$w}px;
  flex: none;
  padding-top: ${(p) => p.$pad ?? 4}px;
`;

const SmallRow = styled.div`
  height: 20.500px;
  display: flex;
  align-items: center;
`;

const RowCaret = styled(Lite)<{ $ml?: number }>`
  margin-left: ${(p) => p.$ml ?? 0}px;
`;

const LayerCombo = styled.div`
  width: 172px;
  height: 18px;
  margin: 1px 0 1.500px;
  background: #46546a;
  border: 1px solid #4e5a6b;
  display: flex;
  align-items: center;
  padding: 0 2px 0 1px;
`;

const LayerName = styled(Cell)`
  text-align: center;
  color: #8d96a3;
`;

const Swatch = styled.div<{ $c: string; $s: number }>`
  width: ${(p) => p.$s}px;
  height: ${(p) => p.$s}px;
  background: ${(p) => p.$c};
`;

const PropCombo = styled.div<{ $flat?: boolean }>`
  width: 113px;
  height: 18px;
  margin-bottom: 2.500px;
  background: ${(p) => (p.$flat ? '#414b59' : '#46536a')};
  border: 1px solid #4c5766;
  display: flex;
  align-items: center;
  gap: ${(p) => (p.$flat ? 4 : 1)}px;
  padding: 0 1px 0 4px;
  color: #858d99;
  > :last-child { margin-left: auto; }
`;

const Rule = styled.div`
  width: 54px;
  height: 1px;
  background: #a9b0b9;
`;

const Wheel = styled.div`
  width: 14px;
  height: 14px;
  border-radius: 50%;
  background: conic-gradient(#f9b233, #f3e04b 12%, #79c24d 25%, #40b8a8 38%, #4a7fe0 50%, #9550d8 62%, #e0488e 75%, #ef5242 88%, #f9b233);
`;

const Highlighted = styled.div`
  width: 20px;
  height: 19px;
  border: 1px solid #6f9fce;
  background: #42536a;
  display: flex;
  align-items: center;
  justify-content: center;
`;

const Flyout = styled.div`
  position: absolute;
  top: 83px;
  left: -1px;
  width: 81px;
  height: 58px;
  background: ${panel};
  padding-top: 1.500px;
`;

const FlyRow = styled.div<{ $h: number; $title?: boolean }>`
  height: ${(p) => p.$h}px;
  display: flex;
  align-items: center;
  color: ${(p) => (p.$title ? '#e2e5e8' : dim)};
  letter-spacing: -0.4px;
`;

type Item = { icon: string; text?: string; caret?: boolean };

const Column = ({ w, iw, items }: { w: number; iw: number; items: Item[] }) => (
  <SmallColumn $w={w}>
    {items.map((it) => (
      <SmallRow key={it.icon}>
        <Slot $w={iw}><Icon n={it.icon} /></Slot>
        {it.text}
        {it.caret && <RowCaret $ml={it.text ? 9 : 1}><Icon n="caret" /></RowCaret>}
      </SmallRow>
    ))}
  </SmallColumn>
);

const Big = ({ w, icon, label, caret }: { w: number; icon: string; label: React.ReactNode; caret?: boolean }) => (
  <BigButton $w={w}>
    {icon === 'A' ? <BigGlyph>A</BigGlyph> : <Icon n={icon} />}
    <BigLabel>{label}</BigLabel>
    {caret && <Lite><Icon n="caret" /></Lite>}
  </BigButton>
);

const Title = ({ children, caret = true, corner }: { children: React.ReactNode; caret?: boolean; corner?: boolean }) => (
  <PanelTitle>
    {children}
    {caret && <Icon n="bigcaret" />}
    {corner && <Launcher><Icon n="corner" /></Launcher>}
  </PanelTitle>
);

/* ---------- document tabs ---------- */

const FileTabs = styled.div`
  height: 25px;
  flex: none;
  display: flex;
  align-items: center;
  padding-top: 2px;
  border-bottom: 3px solid #3b444d;
`;

const MenuSlot = styled.div`
  width: 34px;
  flex: none;
  padding-left: 13px;
`;

const SlantTab = styled.div<{ $w: number; $h: number }>`
  width: ${(p) => p.$w}px;
  height: ${(p) => p.$h}px;
  background: #3c4453;
  clip-path: polygon(9px 0, 100% 0, calc(100% - 8px) 100%, 0 100%);
  display: flex;
  align-items: center;
  color: #fff;
  font-weight: 700;
`;

/* ---------- drawing canvas ---------- */

const Canvas = styled.main`
  height: 502px;
  flex: none;
  position: relative;
  background: #20272e;
`;

const Drawing = styled.svg`
  position: absolute;
  inset: 0;
  display: block;
`;

const ViewLabel = styled.div`
  position: absolute;
  left: 2px;
  top: 4px;
  letter-spacing: -0.4px;
  color: #d9dcde;
`;

const ViewportButtons = styled.div`
  position: absolute;
  right: 5px;
  top: 3px;
  height: 18px;
  display: flex;
`;

const NavBar = styled.div`
  position: absolute;
  left: 1250.500px;
  top: 173px;
  width: 27px;
  height: 172px;
  background: #5b636a;
  border: 1px solid #687077;
  border-radius: 3px;
  display: flex;
  flex-direction: column;
  align-items: center;
  padding: 1px;
  justify-content: space-between;
`;

const NavEnd = styled.div`
  align-self: flex-end;
`;

const CommandLine = styled.div`
  position: absolute;
  left: 278px;
  top: 480px;
  width: 722px;
  height: 22px;
  display: flex;
  background: #262d34;
`;

const CommandInput = styled.div`
  flex: 1;
  background: #bdc0c1;
  border: 1px solid #c9cccd;
  display: flex;
  align-items: center;
  color: #26292b;
  font: 10.500px/14px "DejaVu Sans Mono", "Liberation Mono", monospace;
  letter-spacing: -0.35px;
  padding: 0 4px 0 2px;
  > :last-child { margin-left: auto; }
`;

const CadPoint = ({ x, y }: { x: number; y: number }) => (
  <g>
    <circle cx={x} cy={y} r="10" />
    <path d={`M${x - 14} ${y - 14}l28 28M${x + 14} ${y - 14}l-28 28`} />
  </g>
);

const majorX = [229, 559, 889, 1219];
const majorY = [177.5, 507.5];
const minorX = [31, 97, 163, 295, 361, 427, 493, 625, 691, 757, 823, 955, 1021, 1087, 1153];
const minorY = [243.5, 309.5, 375.5, 441.5, 573.5];

const CadDrawing = () => (
  <Drawing width="1280" height="502" viewBox="0 151 1280 502">
    <g stroke="#232b32">
      {minorX.map((x) => <path key={x} d={`M${x}.5 151v480`} />)}
      {minorY.map((y) => <path key={y} d={`M0 ${y}h1280`} />)}
    </g>
    <g stroke="#2b333b">
      {majorX.map((x) => <path key={x} d={`M${x - 0.5} 151v480`} />)}
      {majorY.map((y) => <path key={y} d={`M0 ${y}h1280`} />)}
    </g>
    <g stroke="#c3c6c9" strokeWidth="1" fill="none">
      <path d="M14 283.500H1280" />
      <path d="M349 283.500L443 217M461 205.500L478 193.500M495 181L538 151" />
      <path d="M564 151L523 283M622 151L613 230M688.500 151L700 240M747 151L787 283" />
      <path d="M655.500 151v24M655.500 181v4M655.500 193v340" />
      <path d="M516 283V535M524 283V486M787.500 283V581" />
      <path d="M959 283.500L181 646" />
      <path d="M524 486L787 581L738 477M787 581L634 653" />
      <path d="M524 486L602.500 653M607.500 470V653M680 466L612 653" />
      <path d="M516 535L655.500 533.500M524 486Q516 505 516 537" />
      <path d="M752 336L760 364" />
      <CadPoint x={787} y={283.5} />
      <CadPoint x={523} y={284.5} />
      <CadPoint x={515.5} y={537.5} />
    </g>
    <path d="M755 358.500l5.500-1.500L763.500 375z" fill="#e6e8e9" />
    <g fill="#f5f6f7" fontFamily='"Liberation Sans", Arial, sans-serif' fontSize="27">
      <text x="346" y="318.500" fontSize="28">T</text>
      <text x="498" y="316">a</text>
      <text x="806.500" y="298.500">c</text>
      <text x="666.500" y="569">o'</text>
      <text x="803" y="585.500">c'</text>
      <text x="-18" y="222" fontSize="47" stroke="#f5f6f7" strokeWidth=".5">P</text>
      <text x="-12.500" y="396" fontSize="49" stroke="#f5f6f7" strokeWidth=".5">P</text>
      <text transform="translate(749.500 315) rotate(74)" fontSize="21">25°</text>
    </g>
    <path d="M750 404h4v6h-3z" fill="#d5d7d9" />
    <g stroke="#b9bdc0" fill="none">
      <path d="M13.500 597v41.500M14 639h41" />
      <rect x="10" y="634.500" width="8" height="8" />
    </g>
    <g fill="#cfd2d4" fontFamily='"Open Sans", sans-serif' fontWeight="300" fontSize="16">
      <text x="14.500" y="594.500" textLength="10" lengthAdjust="spacingAndGlyphs">Y</text>
      <text x="57.500" y="638.500" textLength="11" lengthAdjust="spacingAndGlyphs">X</text>
    </g>
    <g textAnchor="middle" fontFamily='"Liberation Sans", Arial, sans-serif' fontWeight="bold">
      <circle cx="1221" cy="229" r="38.500" fill="none" stroke="#434a52" strokeWidth="8" />
      <g fill="#b6babd" fontSize="15" stroke="#20272e" strokeWidth="1.500" paintOrder="stroke">
        <text x="1221" y="194.500">N</text>
        <text x="1221" y="274">S</text>
        <text x="1181.500" y="234.500">W</text>
        <text x="1261" y="234.500">E</text>
      </g>
      <rect x="1203" y="210.500" width="36.500" height="36.500" fill="#a9adaf" stroke="#b9bcbe" />
      <rect x="1210" y="217.500" width="22" height="23" fill="#9fa3a5" />
      <text x="1221.300" y="232.500" fontSize="10" fill="#41474c" textLength="15.500" lengthAdjust="spacingAndGlyphs">TOP</text>
      <rect x="1202.500" y="290.500" width="37" height="13" rx="3" fill="#878c95" stroke="#a2a6ad" />
      <text x="1215" y="300.500" fontSize="9" fontWeight="normal" fill="#d7dade">WCS</text>
      <path d="M1229 295h5l-2.500 4z" fill="#9ba0a8" />
    </g>
  </Drawing>
);

/* ---------- point style dialog ---------- */

const Dialog = styled.div`
  position: absolute;
  left: 528px;
  top: 48px;
  width: 224px;
  height: 278px;
  border-radius: 7px;
  background: #f0f0f0;
  box-shadow: 0 3px 14px 3px rgba(0, 0, 0, 0.4);
  overflow: hidden;
  color: #1d1f21;
  font: 9.200px/12px ${arial};
  letter-spacing: -0.12px;
`;

const DialogHead = styled.div`
  height: 25px;
  background: #eef3f9;
  display: flex;
  align-items: center;
  font: 10.500px/14px ${ui};
  letter-spacing: -0.35px;
  color: #2c2f33;
`;

const Badge = styled.div`
  width: 12px;
  height: 13px;
  margin: 0 4px 0 7px;
  border-radius: 2px;
  background: linear-gradient(#dc1f57 65%, #7d0f31 65%);
  color: #fff;
  text-align: center;
  font: bold 8px/9px ${ui};
  letter-spacing: 0;
`;

const StyleGrid = styled.div`
  display: grid;
  grid-template-columns: repeat(5, 37px);
  grid-template-rows: repeat(4, 26.500px);
  column-gap: 7.600px;
  row-gap: 4.900px;
  padding: 2.300px 0 0 4px;
`;

const StyleCell = styled.div<{ $on: boolean }>`
  border: 1px solid #3a3a3a;
  background: ${(p) => (p.$on ? '#000' : '#fff')};
  color: ${(p) => (p.$on ? '#fff' : '#333')};
  display: flex;
  align-items: center;
  justify-content: center;
`;

const MARKS = [
  <circle key="m" cx="17.500" cy="12.500" r=".6" fill="currentColor" stroke="none" />,
  null,
  <path key="m" d="M17.500 4.500v16M9.500 12.500h16" />,
  <path key="m" d="M7.500 2.500l20 20M27.500 2.500l-20 20" />,
  <path key="m" d="M17.500 6.500v6.500" />,
];

const PointMark = ({ row, col }: { row: number; col: number }) => (
  <Glyph width="35" height="25" viewBox="0 0 35 25" fill="none" stroke="currentColor" strokeWidth=".9">
    {MARKS[col]}
    {row % 2 === 1 && <circle cx="17.500" cy="12.500" r="9" />}
    {row >= 2 && <rect x="8.500" y="3.500" width="18" height="18" />}
  </Glyph>
);

const SizeRow = styled.div`
  display: flex;
  align-items: center;
  height: 18px;
  margin-top: 29.500px;
  padding-left: 9px;
`;

const SizeInput = styled.div`
  width: 98px;
  height: 16px;
  margin: 0 8px 2px 0;
  background: #fff;
  border-bottom: 1.500px solid #15599b;
  padding: 1px 0 0 0;
`;

const Selected = styled.span`
  background: #1a78c2;
  color: #fff;
`;

const RadioGroup = styled.div`
  margin-top: 18.500px;
`;

const Radio = styled.div<{ $on?: boolean }>`
  display: flex;
  align-items: center;
  height: 16px;
  padding-left: 9px;
  gap: 2px;
  &::before {
    content: '';
    width: 11px;
    height: 11px;
    border-radius: 50%;
    border: ${(p) => (p.$on ? '3.500px solid #0a5ca8' : '1px solid #7d7d7d')};
    background: #fff;
  }
`;

const Buttons = styled.div`
  display: flex;
  gap: 5px;
  margin-top: 5px;
  padding-left: 8.500px;
`;

const Button = styled.div<{ $primary?: boolean }>`
  width: 65.500px;
  height: 18px;
  border-radius: 3px;
  background: #fdfdfd;
  border: 1px solid ${(p) => (p.$primary ? '#3b83c0' : '#d6d6d6')};
  text-align: center;
  line-height: 16px;
`;

const Pointer = styled.svg`
  position: absolute;
  left: 591px;
  top: 231px;
`;

/* ---------- status bar ---------- */

const StatusBar = styled.div`
  height: 27px;
  flex: none;
  display: flex;
  align-items: center;
  padding-bottom: 3px;
  border-top: 3px solid #39434d;
`;

const StatusItem = styled.div<{ $w: number; $on?: boolean; $mr?: number }>`
  width: ${(p) => p.$w}px;
  height: 20px;
  margin-right: ${(p) => p.$mr ?? 1}px;
  flex: none;
  display: flex;
  align-items: center;
  justify-content: space-around;
  background: ${(p) => (p.$on ? '#5285bd' : '#363f4c')};
`;

const STATUS: { w: number; icon: string; on?: boolean; caret?: boolean; mr?: number; text?: string }[] = [
  { w: 19.5, icon: 'sgrid', on: true },
  { w: 33, icon: 'snap', caret: true, mr: 2 },
  { w: 19.5, icon: 'infer' },
  { w: 19.5, icon: 'ortho', on: true },
  { w: 33, icon: 'polar', caret: true },
  { w: 33, icon: 'iso', caret: true, mr: 1 },
  { w: 19, icon: 'otrack', on: true },
  { w: 19.5, icon: 'osnap', on: true, mr: 0 },
  { w: 14, icon: 'caret', mr: 1 },
  { w: 20, icon: 'lwt' },
  { w: 19.5, icon: 'ann1', on: true, mr: 0 },
  { w: 20, icon: 'ann2', mr: 0 },
  { w: 20, icon: 'ann3', mr: 0 },
  { w: 29, icon: '', text: '1:1', caret: true },
  { w: 34, icon: 'gear', caret: true, mr: 0.5 },
  { w: 20, icon: 'plus', mr: 2 },
  { w: 20, icon: 'isolate', mr: 2 },
  { w: 25, icon: 'sprint', mr: 0 },
  { w: 23, icon: 'image', mr: 1 },
  { w: 20, icon: 'clean', mr: 2 },
  { w: 20, icon: 'menu', mr: 0 },
];

/* ---------- taskbar ---------- */

const Taskbar = styled.div`
  height: 40px;
  flex: none;
  display: flex;
  align-items: center;
  color: #33363a;
  letter-spacing: -0.35px;
  background: linear-gradient(90deg, #e5dcd4 0, #e6dad4 200px, #e9d5d6 245px, #d5ddeb 300px, #cdddee 480px, #cfdff0 800px, #dfdbe6 900px, #ead6d9 1000px, #f1dcd3 1150px, #f5ddd0 1280px);
`;

const Weather = styled.div`
  width: 66px;
  line-height: 13px;
`;

const Muted = styled.div`
  color: #6d6a68;
`;

const CountBadge = styled.span<{ $x: number; $y: number; $w: number; $c: string }>`
  position: absolute;
  left: ${(p) => p.$x}px;
  top: ${(p) => p.$y}px;
  width: ${(p) => p.$w}px;
  height: 13px;
  border-radius: 7px;
  background: ${(p) => p.$c};
  color: #fff;
  text-align: center;
  font: 9px/13px ${ui};
`;

const TaskSearch = styled.div`
  width: 182px;
  height: 26px;
  border-radius: 13px;
  background: #f3f6fa;
  display: flex;
  align-items: center;
  padding: 0 3px 0 9px;
  color: #5c6065;
  font-size: 12px;
  letter-spacing: -0.5px;
`;

const SearchWord = styled.span`
  flex: 1;
  margin-left: 8px;
`;

const TaskApp = styled.div<{ $active?: boolean; $run?: boolean }>`
  width: 36.800px;
  height: 40px;
  flex: none;
  position: relative;
  display: flex;
  align-items: center;
  justify-content: center;
  &::before {
    content: '';
    display: ${(p) => (p.$active ? 'block' : 'none')};
    position: absolute;
    inset: 4px 3px;
    border-radius: 3px;
    background: #eff3f9;
  }
  &::after {
    content: '';
    display: ${(p) => (p.$active || p.$run ? 'block' : 'none')};
    position: absolute;
    bottom: 4px;
    width: ${(p) => (p.$active ? 13 : 5)}px;
    height: 2.500px;
    border-radius: 2px;
    background: ${(p) => (p.$active ? '#1473b8' : '#82868b')};
  }
  > svg { position: relative; }
`;

const WordMark = styled.span`
  position: absolute;
  left: 10px;
  top: 15px;
  font: bold 8px/9px ${ui};
  color: #fff;
`;

const TwoLine = styled.div<{ $w: number; $right?: boolean }>`
  width: ${(p) => p.$w}px;
  flex: none;
  text-align: ${(p) => (p.$right ? 'right' : 'center')};
  line-height: 13px;
  color: #35302e;
`;

const APPS: { icon: string; active?: boolean; run?: boolean; extra?: React.ReactNode }[] = [
  { icon: 'taskview' },
  { icon: 'chat' },
  { icon: 'alexa' },
  { icon: 'store', extra: <CountBadge $x={21} $y={6} $w={13} $c="#0f6cbd">1</CountBadge> },
  { icon: 'explorer', run: true },
  { icon: 'edge' },
  { icon: 'chrome' },
  { icon: 'acrobat' },
  { icon: 'monitors', extra: <CountBadge $x={16} $y={6} $w={20} $c="#0f6cbd">99+</CountBadge> },
  { icon: 'link' },
  { icon: 'acad', active: true, extra: <><LogoLetter $top={11} $size={10}>A</LogoLetter><LogoLetter $top={24} $size={5}>CAD</LogoLetter></> },
  { icon: 'ifun', run: true },
  { icon: 'word', run: true, extra: <WordMark>W</WordMark> },
];

export default function App() {
  return (
    <>
      <GlobalStyle />
      <Window>
        <TitleBar>
          <Gap $w={13} />
          <Slot $w={20}><Icon n="logo" /><LogoLetter $top={5} $size={12}>A</LogoLetter></Slot>
          <Quick items={[['caret', 10], ['newfile', 27], ['open', 14], ['save', 26], ['saveas', 14], ['webopen', 24], ['websave', 18], ['plot', 21], ['undo', 20], ['caret', 8], ['redo', 22], ['caret', 8], ['customize', 15], ['share', 19.5]]} />
          <Gap $w={1.5} />
          <ShareText $w={153}>Share</ShareText>
          <Cell $w={120}>Autodesk AutoCAD 2024</Cell>
          <Cell $w={188}>Drawing2.dwg</Cell>
          <Slot $w={9}><Icon n="play" /></Slot>
          <Gap $w={3} />
          <SearchBox>Type a keyword or phrase</SearchBox>
          <Quick items={[['search', 21], ['user', 19]]} />
          <Gap $w={2} />
          <Cell $w={67.5}>vikneswm</Cell>
          <Quick items={[['caret', 9], ['cart', 26], ['autodesk', 12], ['caret', 16]]} />
          <Gap $w={10} />
          <Slot $w={14}><Icon n="help" /><HelpMark>?</HelpMark></Slot>
          <Quick items={[['caret', 18]]} />
          <WindowButtons><Quick items={[['min', 38], ['restore', 38], ['close', 39]]} /></WindowButtons>
        </TitleBar>
        <RibbonTabs>
          <RibbonTab $w={42} $active>Home</RibbonTab>
          <RibbonTab $w={42}>Insert</RibbonTab>
          <RibbonTab $w={54}>Annotate</RibbonTab>
          <RibbonTab $w={42}>View</RibbonTab>
          <RibbonTab $w={47}>Manage</RibbonTab>
          <RibbonTab $w={52}>Output</RibbonTab>
          <RibbonTab $w={46}>Add-ins</RibbonTab>
          <RibbonTab $w={72}>Collaborate</RibbonTab>
          <RibbonTab $w={71}>Express Tools</RibbonTab>
          <RibbonTab $w={84}>Featured Apps</RibbonTab>
          <Gap $w={13} />
          <Slot $w={28}><Icon n="minirib" /><Gap $w={3} /><Icon n="caret" /></Slot>
        </RibbonTabs>
        <Ribbon>
          <Panel $w={185}>
            <PanelBody>
              <Big w={34} icon="line" label="Line" />
              <Big w={37} icon="polyline" label="Polyline" />
              <Big w={46} icon="circle" label="Circle" caret />
              <Big w={29} icon="arc" label="Arc" caret />
              <Column w={36} iw={24} items={[{ icon: 'rect', caret: true }, { icon: 'ellipse', caret: true }, { icon: 'hatch', caret: true }]} />
            </PanelBody>
            <Title>Draw</Title>
          </Panel>
          <Panel $w={211}>
            <PanelBody>
              <Column w={60} iw={22} items={[{ icon: 'move', text: 'Move' }, { icon: 'copy', text: 'Copy' }, { icon: 'stretch', text: 'Stretch' }]} />
              <Column w={60} iw={23} items={[{ icon: 'rotate', text: 'Rotate' }, { icon: 'mirror', text: 'Mirror' }, { icon: 'scale', text: 'Scale' }]} />
              <Column w={62} iw={22} items={[{ icon: 'trim', text: 'Trim', caret: true }, { icon: 'fillet', text: 'Fillet', caret: true }, { icon: 'array', text: 'Array', caret: true }]} />
              <Column w={24} iw={24} items={[{ icon: 'erase' }, { icon: 'explode' }, { icon: 'offset' }]} />
            </PanelBody>
            <Title>Modify</Title>
          </Panel>
          <Panel $w={122}>
            <PanelBody>
              <Big w={38} icon="A" label="Text" caret />
              <Big w={50} icon="dimension" label="Dimension" />
              <Column w={32} iw={22} items={[{ icon: 'angle', caret: true }, { icon: 'leader', caret: true }, { icon: 'table' }]} />
            </PanelBody>
            <Title>Annotation</Title>
          </Panel>
          <Panel $w={228}>
            <PanelBody>
              <Big w={52} icon="layerprops" label={<>Layer<br />Properties</>} />
              <SmallColumn $w={174}>
                <LayerCombo>
                  <Slot $w={15}><Icon n="bulb" /></Slot>
                  <Slot $w={16}><Icon n="sun" /></Slot>
                  <Slot $w={17}><Icon n="unlock" /></Slot>
                  <Slot $w={16}><Swatch $c="#c0c4cb" $s={12} /></Slot>
                  <LayerName $w={10}>0</LayerName>
                  <RowCaret $ml={88}><Icon n="bigcaret" /></RowCaret>
                </LayerCombo>
                <SmallRow><Quick items={[['l1', 20], ['l2', 20], ['l3', 20], ['l4', 20], ['l5', 20]]} /></SmallRow>
                <SmallRow><Quick items={[['l6', 20], ['l7', 20], ['l8', 20], ['l9', 20], ['l10', 20]]} /></SmallRow>
              </SmallColumn>
            </PanelBody>
            <Title>Layers</Title>
          </Panel>
          <Panel $w={66}>
            <PanelBody>
              <Big w={34} icon="insert" label="Insert" caret />
              <Column w={30} iw={17} items={[{ icon: 'b1' }, { icon: 'b2' }, { icon: 'b3', caret: true }]} />
            </PanelBody>
            <Title>Block</Title>
          </Panel>
          <Panel $w={185}>
            <PanelBody>
              <Big w={51} icon="match" label={<>Match<br />Properties</>} />
              <SmallColumn $w={18}>
                <SmallRow><Slot $w={17}><Wheel /></Slot></SmallRow>
                <SmallRow><Slot $w={17}><Icon n="linew" /></Slot></SmallRow>
                <SmallRow><Slot $w={17}><Icon n="linet" /></Slot></SmallRow>
              </SmallColumn>
              <SmallColumn $w={113} $pad={5}>
                <PropCombo $flat><Swatch $c="#7b828d" $s={13} /><span>ByLayer</span><Icon n="bigcaret" /></PropCombo>
                <PropCombo><Rule /><span>ByLayer</span><Lite><Icon n="bigcaret" /></Lite></PropCombo>
                <PropCombo><Rule /><span>ByLayer</span><Lite><Icon n="bigcaret" /></Lite></PropCombo>
              </SmallColumn>
            </PanelBody>
            <Title corner>Properties</Title>
          </Panel>
          <Panel $w={57}>
            <PanelBody>
              <Big w={34} icon="group" label="Group" />
              <SmallColumn $w={20}>
                <SmallRow><Slot $w={20}><Icon n="g1" /></Slot></SmallRow>
                <SmallRow><Slot $w={20}><Icon n="g2" /></Slot></SmallRow>
                <SmallRow><Highlighted><Icon n="g3" /></Highlighted></SmallRow>
              </SmallColumn>
            </PanelBody>
            <Title>Groups</Title>
          </Panel>
          <Panel $w={81}>
            <PanelBody>
              <Big w={58} icon="measure" label="Measure" caret />
              <Column w={18} iw={18} items={[{ icon: 'u1' }, { icon: 'u2' }, { icon: 'u3' }]} />
            </PanelBody>
            <Flyout>
              <FlyRow $h={20}><Slot $w={22}><Icon n="idpoint" /></Slot>ID Point</FlyRow>
              <FlyRow $h={20.5}><Slot $w={22}><Icon n="ptstyle" /></Slot>Point Style...</FlyRow>
              <FlyRow $h={15} $title><Slot $w={17}><Icon n="pin" /></Slot><Gap $w={7} />Utilities</FlyRow>
            </Flyout>
          </Panel>
          <Panel $w={75}>
            <PanelBody>
              <Big w={42} icon="paste" label="Paste" caret />
              <Column w={30} iw={20} items={[{ icon: 'cut', caret: true }, { icon: 'copyclip', caret: true }]} />
            </PanelBody>
            <Title caret={false}>Clipboard</Title>
          </Panel>
          <Panel $w={69}>
            <PanelBody>
              <Big w={50} icon="base" label="Base" caret />
            </PanelBody>
            <PanelTitle>View<Icon n="bigcaret" /><Icon n="corner" /><Gap $w={9} /></PanelTitle>
          </Panel>
        </Ribbon>
        <FileTabs>
          <MenuSlot><Icon n="menu" /></MenuSlot>
          <Icon n="slash" />
          <Gap $w={7} />
          <Cell $w={28}>Start</Cell>
          <SlantTab $w={86} $h={20}><Gap $w={13} />Drawing2*<Gap $w={8} /><Icon n="x" /></SlantTab>
          <Slot $w={28}><Icon n="plus" /></Slot>
          <Icon n="slash" />
        </FileTabs>
        <Canvas>
          <CommandLine>
            <Slot $w={11}><Icon n="grip" /></Slot>
            <Slot $w={13}><Icon n="x" /></Slot>
            <Slot $w={25}><Gap $w={3} /><Icon n="wrench" /></Slot>
            <CommandInput>
              <Icon n="cmd" /><Gap $w={1} /><Icon n="caret" /><Gap $w={2} />'_ptype
              <Icon n="up" />
            </CommandInput>
          </CommandLine>
          <CadDrawing />
          <NavBar>
            <NavEnd><Icon n="ring" /></NavEnd>
            <Icon n="wheel" /><Icon n="tiny" />
            <Icon n="hand" />
            <Icon n="zoomext" /><Icon n="tiny" />
            <Icon n="orbit" /><Icon n="tiny" />
            <Icon n="motion" />
            <NavEnd><Icon n="ring" /></NavEnd>
          </NavBar>
          <ViewLabel>[−][Top][2D Wireframe]</ViewLabel>
          <ViewportButtons><Quick items={[['vpmin', 17], ['vprestore', 17], ['vpclose', 16]]} /></ViewportButtons>
          <Dialog>
            <DialogHead>
              <Badge>A</Badge>
              <Cell $w={182.5}>Point Style</Cell>
              <Glyph width="9" height="9" viewBox="0 0 9 9"><path d="M.5.500l8 8M8.500.500l-8 8" stroke="#3a3d40" /></Glyph>
            </DialogHead>
            <StyleGrid>
              {[0, 1, 2, 3].map((row) => [0, 1, 2, 3, 4].map((col) => (
                <StyleCell key={`${row}-${col}`} $on={row === 1 && col === 3}><PointMark row={row} col={col} /></StyleCell>
              )))}
            </StyleGrid>
            <SizeRow>
              <Cell $w={61}>Point Size:</Cell>
              <SizeInput><Selected>3</Selected></SizeInput>
              Units
            </SizeRow>
            <RadioGroup>
              <Radio>Set Size Relative to Screen</Radio>
              <Radio $on>Set Size in Absolute Units</Radio>
            </RadioGroup>
            <Buttons>
              <Button $primary>OK</Button>
              <Button>Cancel</Button>
              <Button>Help</Button>
            </Buttons>
          </Dialog>
          <Pointer width="12" height="18" viewBox="0 0 12 18">
            <path d="M1 1v12.500l3-2.700 2.200 5 2-.9-2.200-4.800h4z" fill="#fff" stroke="#333" />
          </Pointer>
        </Canvas>
        <StatusBar>
          <MenuSlot><Icon n="menu" /></MenuSlot>
          <SlantTab $w={57} $h={20}><Gap $w={14} />Model</SlantTab>
          <Gap $w={6} />
          <Cell $w={42}>Layout1</Cell>
          <Icon n="slash" />
          <Gap $w={6} />
          <Cell $w={42}>Layout2</Cell>
          <Icon n="slash" />
          <Slot $w={27}><Icon n="plus" /></Slot>
          <Icon n="slash" />
          <Gap $w={504} />
          <StatusItem $w={39.5}>MODEL</StatusItem>
          {STATUS.map((s, i) => (
            <StatusItem key={i} $w={s.w} $on={s.on} $mr={s.mr}>
              {s.icon ? <Icon n={s.icon} /> : s.text}
              {s.caret && <Icon n="caret" />}
            </StatusItem>
          ))}
        </StatusBar>
        <Taskbar>
          <Gap $w={16} />
          <Slot $w={20}><Icon n="haze" /><CountBadge $x={10} $y={5} $w={13} $c="#c02b20">1</CountBadge></Slot>
          <Gap $w={7} />
          <Weather>30°C<Muted>Haze</Muted></Weather>
          <Gap $w={152} />
          <Icon n="windows" />
          <Gap $w={12} />
          <TaskSearch><Icon n="find" /><SearchWord>Search</SearchWord><Icon n="doodle" /></TaskSearch>
          <Gap $w={1.5} />
          {APPS.map((a) => <TaskApp key={a.icon} $active={a.active} $run={a.run}><Icon n={a.icon} />{a.extra}</TaskApp>)}
          <Gap $w={48.5} />
          <Quick items={[['chev', 24], ['cloud', 29], ['mic', 24]]} />
          <TwoLine $w={40}>ENG<br />IN</TwoLine>
          <Quick items={[['wifi', 22], ['volume', 20], ['battery', 20]]} />
          <TwoLine $w={61} $right>10:21<br />24-03-2024</TwoLine>
          <Slot $w={25}><Icon n="bell" /></Slot>
        </Taskbar>
        <Watermark>Recorded with iFun Screen Recorder</Watermark>
      </Window>
    </>
  );
}
